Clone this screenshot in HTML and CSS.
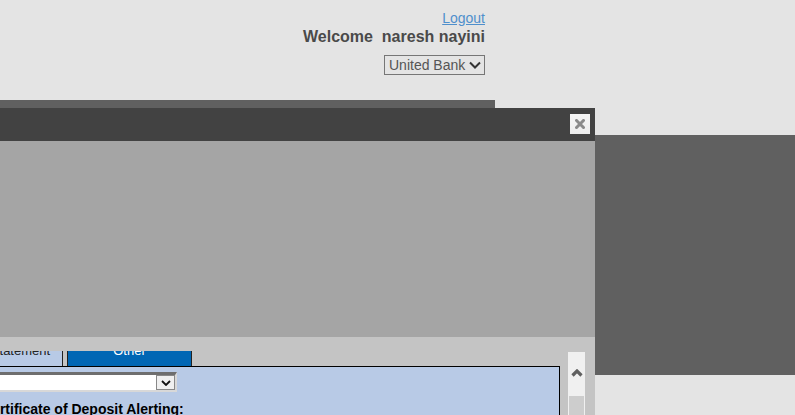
FILE: index.html
```html
<!DOCTYPE html>
<html>
<head>
<meta charset="utf-8">
<title>Alerts</title>
<link rel="stylesheet" href="styles.css">
</head>
<body>
  <div class="header">
    <div class="logout-line"><a class="logout" href="#">Logout</a></div>
    <div class="welcome">Welcome&nbsp; naresh nayini</div>
    <div class="bank-line">
      <div class="bank-select">
        <span>United Bank</span>
        <svg class="bank-chev" width="12" height="8" viewBox="0 0 12 8"><path d="M1 1.5 L6 6.5 L11 1.5" fill="none" stroke="#333" stroke-width="2"/></svg>
      </div>
    </div>
  </div>

  <div class="overlay-top"></div>
  <div class="overlay-right"></div>

  <div class="modal">
    <div class="modal-title">
      <div class="close-btn">
        <svg width="10" height="10" viewBox="0 0 10 10"><path d="M1.5 1.5 L8.5 8.5 M8.5 1.5 L1.5 8.5" stroke="#8a8a8a" stroke-width="3" stroke-linecap="square"/></svg>
      </div>
    </div>
    <div class="modal-frame"></div>
    <div class="modal-lower">
      <div class="scrollview">
        <div class="tabs">
          <div class="tab tab-statement">Statement</div>
          <div class="tab tab-other">Other</div>
        </div>
        <div class="panel">
          <div class="fake-select">
            <div class="fake-select-btn">
              <svg width="10" height="6" viewBox="0 0 10 6"><path d="M1 1 L5 5 L9 1" fill="none" stroke="#111" stroke-width="1.8"/></svg>
            </div>
          </div>
          <div class="section-title">Certificate of Deposit Alerting:</div>
        </div>
      </div>
      <div class="vscroll">
        <div class="vscroll-up">
          <svg width="12" height="8" viewBox="0 0 12 8"><path d="M1.5 6.5 L6 2 L10.5 6.5" fill="none" stroke="#606060" stroke-width="3.2"/></svg>
        </div>
        <div class="vscroll-thumb"></div>
      </div>
    </div>
  </div>
</body>
</html>
```

FILE: styles.css
```css
html, body {
  margin: 0;
  padding: 0;
  height: 415px;
  overflow: hidden;
}

body {
  background: #e4e4e4;
  font-family: "Liberation Sans", Arial, sans-serif;
  position: relative;
}

.header {
  width: 485px;
  text-align: right;
  padding-top: 9px;
}

.logout-line {
  height: 18px;
  line-height: 18px;
  font-size: 14px;
}

.logout {
  color: #4f8fcc;
  text-decoration: underline;
}

.welcome {
  font-size: 16px;
  font-weight: bold;
  line-height: 19px;
  color: #4a4a4a;
}

.bank-line {
  display: flex;
  justify-content: flex-end;
  margin-top: 9px;
}

.bank-select {
  box-sizing: border-box;
  width: 101px;
  height: 20px;
  border: 1px solid #767676;
  display: flex;
  align-items: center;
  justify-content: space-between;
  padding: 0 3px 0 4px;
  font-size: 14px;
  color: #555;
  line-height: 18px;
}

.bank-chev {
  display: block;
}

.overlay-top {
  position: absolute;
  left: 0;
  top: 100px;
  width: 495px;
  height: 8px;
  background: #606060;
}

.overlay-right {
  position: absolute;
  left: 595px;
  top: 135px;
  width: 200px;
  height: 240px;
  background: #606060;
}

.modal {
  position: absolute;
  left: -40px;
  top: 108px;
  width: 635px;
}

.modal-title {
  box-sizing: border-box;
  height: 33px;
  background: #424242;
  display: flex;
  justify-content: flex-end;
  align-items: flex-start;
  padding: 6px 5px 0 0;
}

.close-btn {
  width: 20px;
  height: 20px;
  background: linear-gradient(#f6f6f6, #ececec);
  display: flex;
  align-items: center;
  justify-content: center;
}

.close-btn svg {
  display: block;
}

.modal-frame {
  height: 196px;
  background: #a5a5a5;
}

.modal-lower {
  box-sizing: border-box;
  height: 200px;
  background: #c4c4c4;
  padding: 14px 10px 0 0;
  display: flex;
}

.scrollview {
  flex: 1;
  overflow: hidden;
  padding-right: 8px;
}

.tabs {
  display: flex;
  gap: 4px;
  margin-top: -13px;
  padding-left: 18px;
}

.tab {
  box-sizing: border-box;
  height: 28px;
  border: 1px solid #222;
  border-bottom: none;
  padding-top: 4px;
  line-height: 16px;
  font-size: 13px;
  text-align: center;
}

.tab-statement {
  width: 85px;
  background: #b8cae6;
  color: #222;
}

.tab-other {
  width: 125px;
  background: #0066b4;
  color: #fff;
}

.panel {
  border: 1px solid #000;
  background: #b8cae6;
  padding: 5px 10px 0 21px;
  height: 120px;
}

.fake-select {
  box-sizing: border-box;
  width: 195px;
  height: 20px;
  background: #fff;
  border-top: 3px solid #6e6e6e;
  border-left: 2px solid #6e6e6e;
  border-right: 2px solid #d8d8d8;
  border-bottom: 2px solid #d8d8d8;
  display: flex;
  justify-content: flex-end;
}

.fake-select-btn {
  box-sizing: border-box;
  width: 19px;
  height: 15px;
  background: #f0f0f0;
  border: 1px solid #888;
  display: flex;
  align-items: center;
  justify-content: center;
}

.fake-select-btn svg {
  display: block;
}

.section-title {
  margin-top: 9px;
  font-size: 14px;
  font-weight: bold;
  line-height: 16px;
  color: #000;
}

.vscroll {
  width: 17px;
  margin-top: 1px;
  background: #f0f0f0;
  display: flex;
  flex-direction: column;
}

.vscroll-up {
  height: 44px;
  display: flex;
  justify-content: center;
  padding-top: 17px;
  box-sizing: border-box;
}

.vscroll-up svg {
  display: block;
}

.vscroll-thumb {
  margin: 0 1px;
  height: 60px;
  background: #cdcdcd;
}
```
